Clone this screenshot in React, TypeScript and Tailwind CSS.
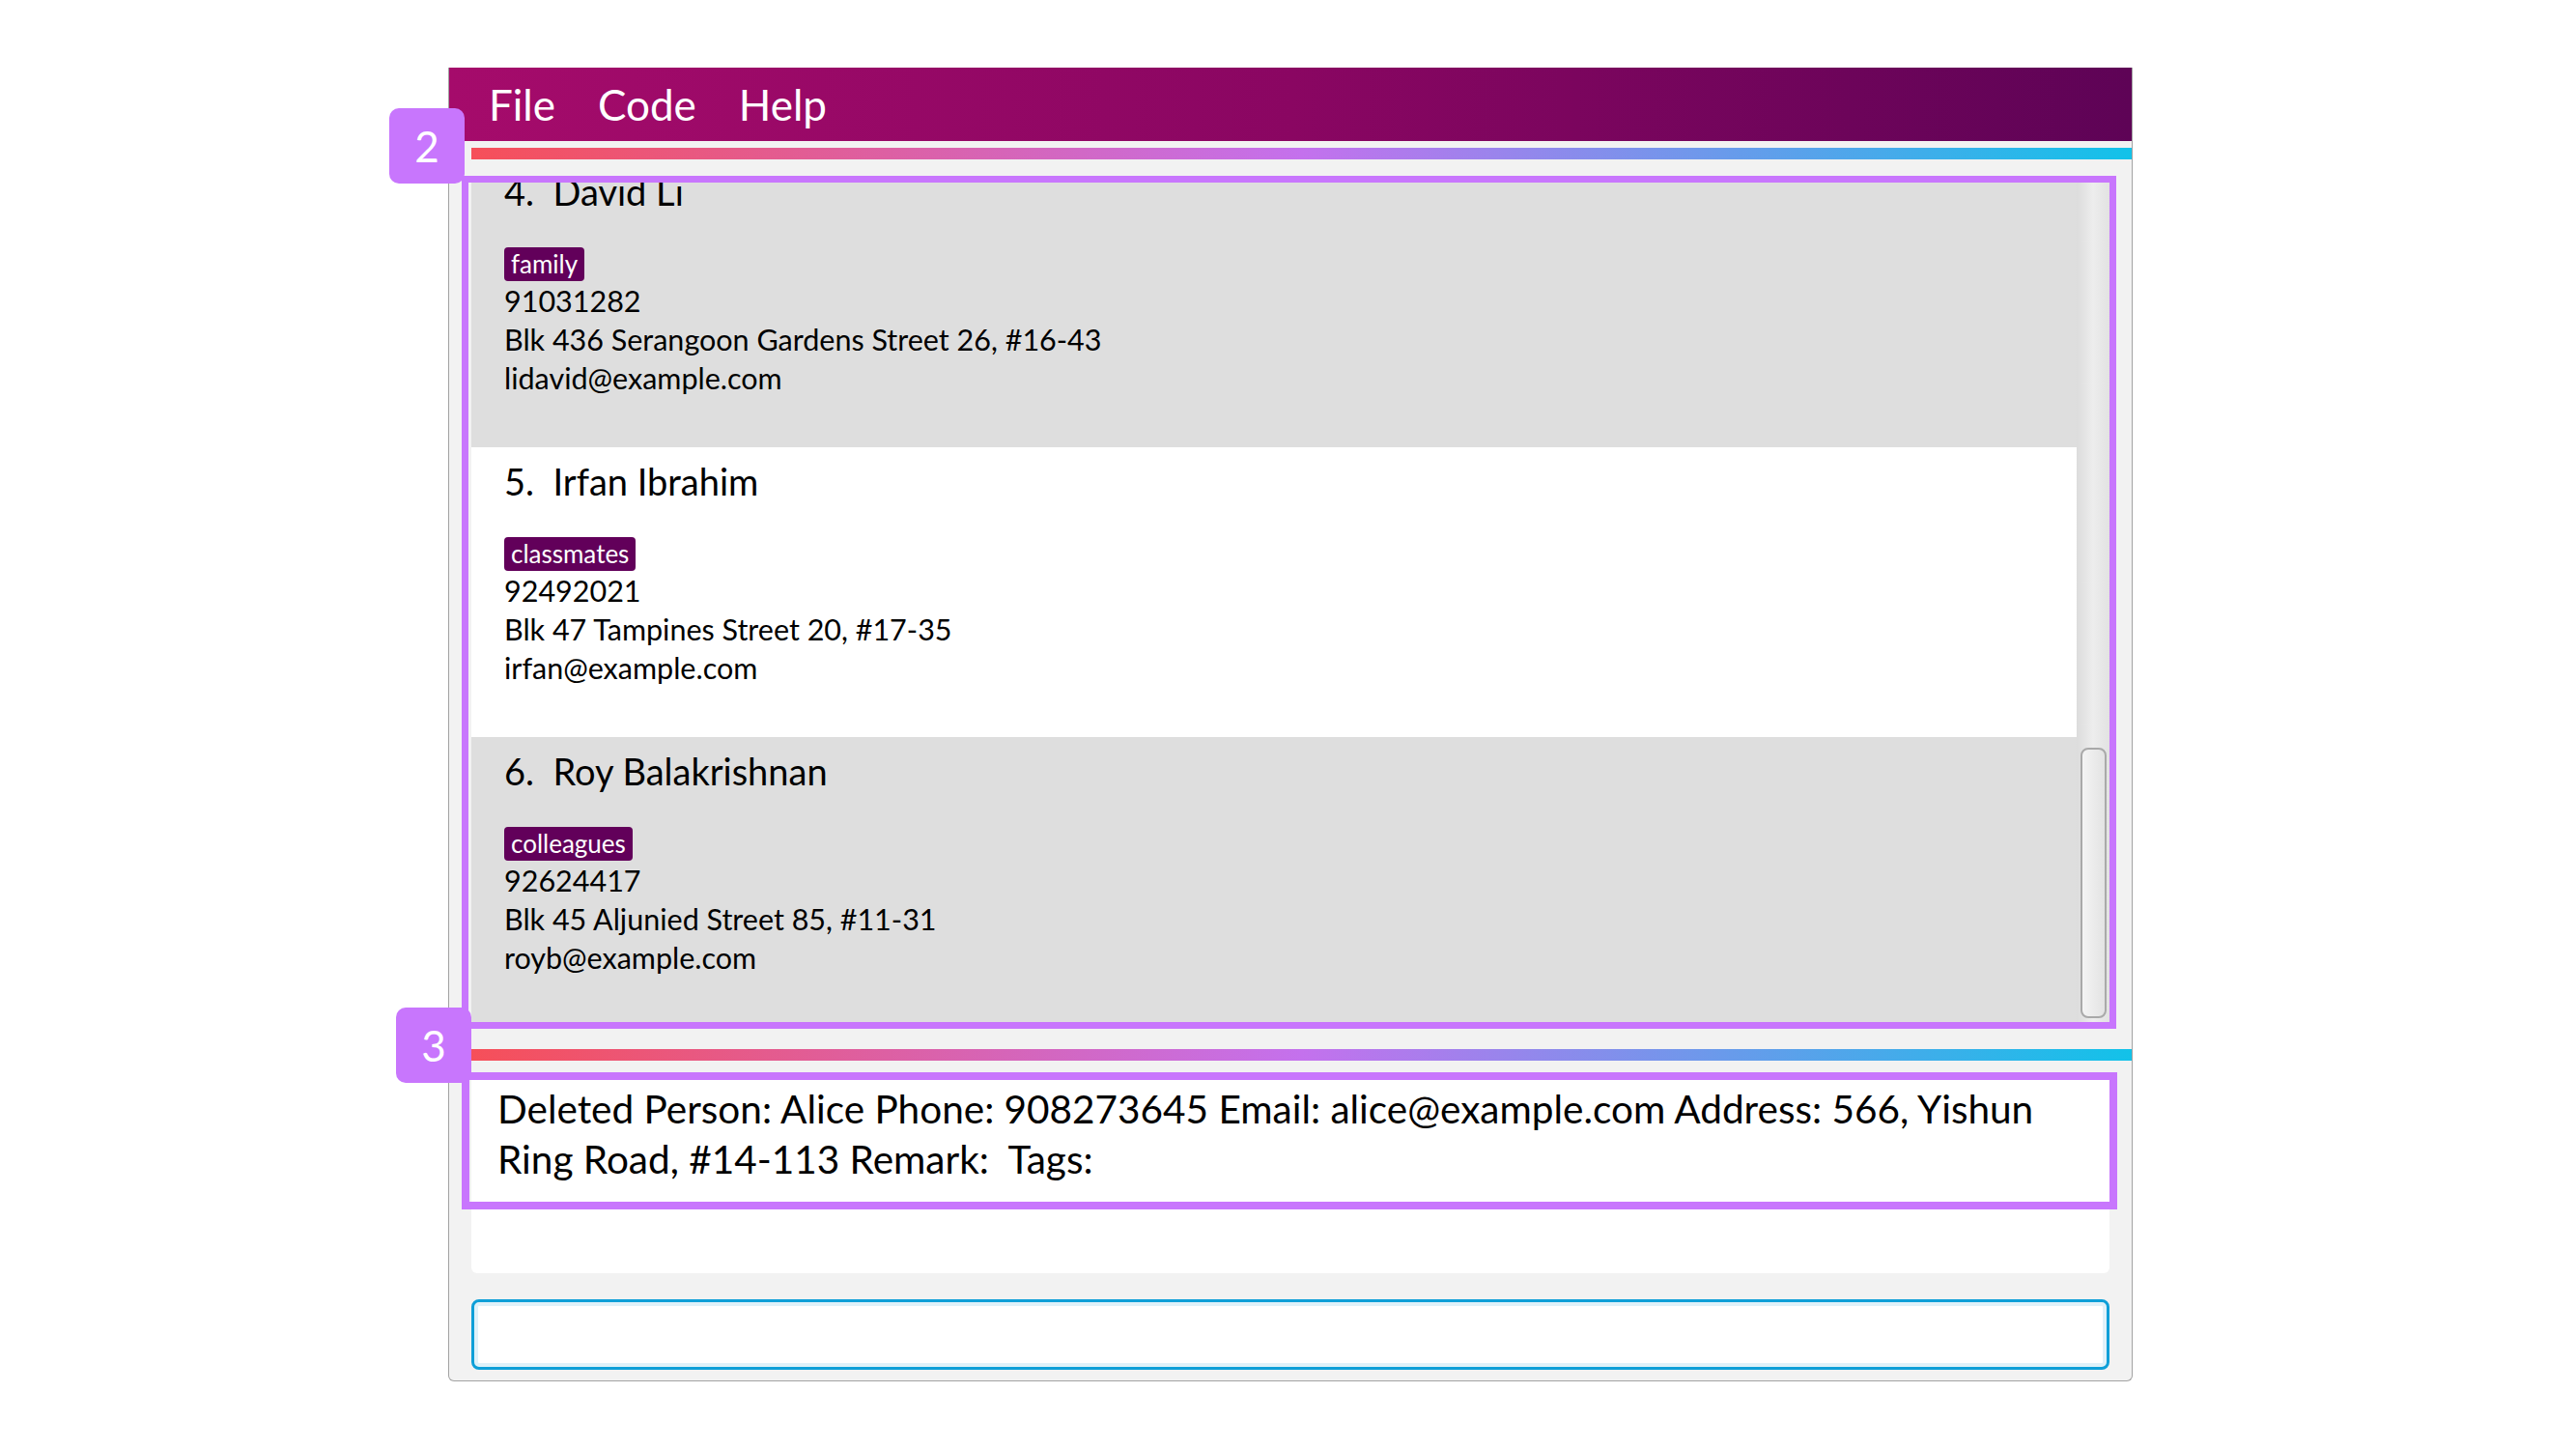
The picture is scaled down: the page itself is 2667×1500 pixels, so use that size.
const font = "font-['Lato','Liberation_Sans',sans-serif]";

type Person = {
  index: number;
  name: string;
  tag: string;
  phone: string;
  address: string;
  email: string;
};

const people: Person[] = [
  {
    index: 4,
    name: "David Li",
    tag: "family",
    phone: "91031282",
    address: "Blk 436 Serangoon Gardens Street 26, #16-43",
    email: "lidavid@example.com",
  },
  {
    index: 5,
    name: "Irfan Ibrahim",
    tag: "classmates",
    phone: "92492021",
    address: "Blk 47 Tampines Street 20, #17-35",
    email: "irfan@example.com",
  },
  {
    index: 6,
    name: "Roy Balakrishnan",
    tag: "colleagues",
    phone: "92624417",
    address: "Blk 45 Aljunied Street 85, #11-31",
    email: "royb@example.com",
  },
];

const strip = "h-[12px] bg-[linear-gradient(90deg,#f64f59_0%,#c471ed_50%,#12c2e9_100%)]";

export default function App() {
  return (
    <div className={`min-h-screen bg-white pl-[464px] pt-[70px] ${font}`}>
      <div className="flex h-[1360px] w-[1744px] flex-col rounded-b-[6px] border-x border-b border-[#a3a3a3] bg-[#f2f2f2]">
        {/* menu bar */}
        <div className="flex h-[76px] items-center bg-[linear-gradient(90deg,#a50b6b_0%,#8a0662_50%,#5e0356_100%)] pl-[19px] text-[44px] text-white">
          <span className="px-[22px]">File</span>
          <span className="px-[22px]">Code</span>
          <span className="px-[22px]">Help</span>
        </div>

        <div className={`ml-[23px] mt-[7px] ${strip}`} />

        {/* person list */}
        <div className="relative mx-[23px] mt-[23px] h-[870px]">
          <div className="flex h-full overflow-hidden">
            <div className="flex-1 overflow-hidden">
              <div className="-mt-[25px]">
                {people.map((p, i) => (
                  <PersonCard key={p.index} person={p} shaded={i % 2 === 0} />
                ))}
              </div>
            </div>
            <div className="w-[34px] bg-[linear-gradient(90deg,#dcdcdc,#ededed_50%,#e2e2e2)] pl-[4px] pr-[3px] pt-[586px] pb-[4px]">
              <div className="h-full rounded-[8px] border-2 border-[#a9a9a9] bg-[linear-gradient(90deg,#f4f4f4,#e3e3e3)]" />
            </div>
          </div>
          <div className="pointer-events-none absolute -bottom-[7px] -left-[10px] -right-[7px] -top-[6px] border-[7px] border-[#c876fd]" />
          <Badge label="2" className="-left-[85px] -top-[76px]" />
        </div>

        <div className={`ml-[23px] mt-[28px] ${strip}`} />

        {/* result display */}
        <div className="relative mx-[23px] mt-[12px] h-[208px] rounded-b-[6px] bg-white">
          <p className="whitespace-pre-wrap pl-[27px] pt-[12px] text-[40.5px] leading-[52px] text-black">
            Deleted Person: Alice Phone: 908273645 Email: alice@example.com Address: 566, Yishun
            <br />
            {"Ring Road, #14-113 Remark:  Tags:"}
          </p>
          <div className="pointer-events-none absolute -left-[10px] -right-[8px] top-0 h-[142px] border-[8px] border-[#c876fd]" />
          <Badge label="3" className="-left-[78px] -top-[67px]" />
        </div>

        {/* command box */}
        <div className="mx-[23px] mt-[27px] h-[73px] rounded-[8px] border-[3px] border-[#0e9fd8] bg-white shadow-[inset_0_0_0_4px_#dff1f9]" />
      </div>
    </div>
  );
}

function PersonCard({ person, shaded }: { person: Person; shaded: boolean }) {
  return (
    <div className={`h-[300px] px-[34px] pt-[10px] ${shaded ? "bg-[#dedede]" : "bg-white"}`}>
      <div className="h-[50px] text-[38px] leading-[50px] text-black">
        {person.index}.&nbsp;&nbsp;{person.name}
      </div>
      <div className="mt-[33px] flex">
        <span className="flex h-[35px] items-center rounded-[4px] bg-[#62005a] px-[7px] text-[26px] text-white">
          {person.tag}
        </span>
      </div>
      <div className="text-[30.5px] leading-[40px] text-black">
        <div>{person.phone}</div>
        <div>{person.address}</div>
        <div>{person.email}</div>
      </div>
    </div>
  );
}

function Badge({ label, className }: { label: string; className: string }) {
  return (
    <div
      className={`absolute flex h-[78px] w-[78px] items-center justify-center rounded-[10px] bg-[#c876fd] text-[44px] text-white ${className}`}
    >
      {label}
    </div>
  );
}
